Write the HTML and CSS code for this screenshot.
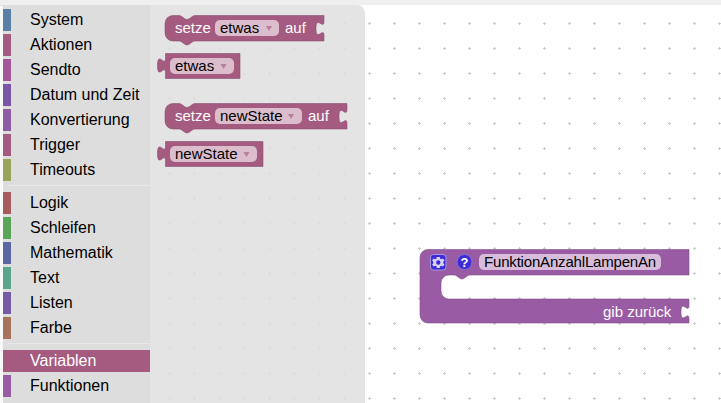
FILE: index.html
```html
<!DOCTYPE html>
<html lang="de">
<head>
<meta charset="utf-8">
<title>Blockly</title>
<link rel="stylesheet" href="styles.css">
</head>
<body>
<div class="topbar"></div>
<div class="editor">
  <ul class="toolbox">
    <li class="cat"><span class="strip c-system"></span>System</li>
    <li class="cat"><span class="strip c-aktionen"></span>Aktionen</li>
    <li class="cat"><span class="strip c-sendto"></span>Sendto</li>
    <li class="cat"><span class="strip c-datum"></span>Datum und Zeit</li>
    <li class="cat"><span class="strip c-konv"></span>Konvertierung</li>
    <li class="cat"><span class="strip c-trigger"></span>Trigger</li>
    <li class="cat"><span class="strip c-timeouts"></span>Timeouts</li>
    <li class="sep"></li>
    <li class="cat"><span class="strip c-logik"></span>Logik</li>
    <li class="cat"><span class="strip c-schleifen"></span>Schleifen</li>
    <li class="cat"><span class="strip c-mathe"></span>Mathematik</li>
    <li class="cat"><span class="strip c-text"></span>Text</li>
    <li class="cat"><span class="strip c-listen"></span>Listen</li>
    <li class="cat"><span class="strip c-farbe"></span>Farbe</li>
    <li class="sep"></li>
    <li class="cat selected"><span class="strip c-var"></span>Variablen</li>
    <li class="cat"><span class="strip c-funk"></span>Funktionen</li>
  </ul>
  <div class="canvas">
    <svg class="surface" width="571" height="398" viewBox="150 5 571 398" xmlns="http://www.w3.org/2000/svg">
      <defs>
        <pattern id="grid" x="157" y="11" width="25" height="25" patternUnits="userSpaceOnUse">
          <path class="dot" d="M12.500 11v3M11 12.500h3"/>
        </pattern>
      </defs>
      <rect x="150" y="5" width="571" height="398" fill="#fff"/>
      <rect x="150" y="5" width="571" height="398" fill="url(#grid)"/>
      <path class="flyout" d="M150 5H357a8 8 0 0 1 8 8V403H150Z"/>
      <rect x="150" y="5" width="215" height="398" fill="url(#grid)" opacity=".3"/>

      <!-- setze etwas auf -->
      <path class="blk var" d="M173 15.500H179c1 0 2 .5 3 1.200l2.800 2c.8 .5 1.500 .8 2.200 .8s1.400-.3 2.200-.8l2.800-2c1-.7 2-1.200 3-1.200H324V21.500c0 9-8-7-8 7s8-2 8 7V41H195c-1 0-2 .5-3 1.200l-2.800 2c-.8 .5-1.500 .8-2.200 .8s-1.400-.3-2.200-.8l-2.800-2c-1-.7-2-1.200-3-1.200H173a8 8 0 0 1-8-8V23.500a8 8 0 0 1 8-8Z"/>
      <text class="lbl" x="175" y="33">setze</text>
      <rect class="fld var-fld" x="215" y="20" width="64" height="16" rx="5"/>
      <text class="val" x="220" y="33">etwas</text>
      <polygon class="arr" points="266,26 272,26 269,31"/>
      <text class="lbl" x="285" y="33">auf</text>

      <!-- etwas -->
      <path class="blk var" d="M165.500 53.500H240V78.500H165.500V73c0-10-8 8-8-7.500s8 2.500 8-7.500Z"/>
      <rect class="fld var-fld" x="170" y="58" width="64" height="16" rx="5"/>
      <text class="val" x="175" y="71">etwas</text>
      <polygon class="arr" points="220.500,64 226.500,64 223.500,69"/>

      <!-- setze newState auf -->
      <path class="blk var" d="M173 103.500H179c1 0 2 .5 3 1.200l2.800 2c.8 .5 1.500 .8 2.200 .8s1.400-.3 2.200-.8l2.800-2c1-.7 2-1.200 3-1.200H347V109.500c0 9-8-7-8 7s8-2 8 7V129H195c-1 0-2 .5-3 1.200l-2.800 2c-.8 .5-1.500 .8-2.200 .8s-1.400-.3-2.200-.8l-2.800-2c-1-.7-2-1.200-3-1.200H173a8 8 0 0 1-8-8V111.500a8 8 0 0 1 8-8Z"/>
      <text class="lbl" x="175" y="121">setze</text>
      <rect class="fld var-fld" x="215" y="108" width="87" height="16" rx="5"/>
      <text class="val" x="220" y="121">newState</text>
      <polygon class="arr" points="288,114 294,114 291,119"/>
      <text class="lbl" x="308" y="121">auf</text>

      <!-- newState -->
      <path class="blk var" d="M165.500 141.500H263V166.500H165.500V161c0-10-8 8-8-7.500s8 2.500 8-7.500Z"/>
      <rect class="fld var-fld" x="170" y="146" width="87" height="16" rx="5"/>
      <text class="val" x="175" y="159">newState</text>
      <polygon class="arr" points="243.500,152 249.500,152 246.500,157"/>

      <!-- function block -->
      <path class="blk fn" d="M428 249.500H689V275H470c-1 0-2 .5-3 1.200l-2.800 2c-.8 .5-1.500 .8-2.200 .8s-1.400-.3-2.200-.8l-2.800-2c-1-.7-2-1.200-3-1.200H449a8 8 0 0 0-8 8V291a8 8 0 0 0 8 8H689V305.500c0 9-8-7-8 6.500s8-2 8 6.500V323H428a8 8 0 0 1-8-8V257.500a8 8 0 0 1 8-8Z"/>
      <rect class="gear-bg" x="430.500" y="254.500" width="15.500" height="15.500" rx="3"/>
      <path class="gear" fill-rule="evenodd" d="M436.800 257h3l.4 1.700 1.300.6 1.500-.9 1.500 2.200-1.200 1.200v1.400l1.200 1.200-1.500 2.200-1.500-.9-1.300.6-.4 1.700h-3l-.4-1.700-1.300-.6-1.500.9-1.500-2.200 1.200-1.200v-1.400l-1.200-1.200 1.500-2.200 1.500.9 1.300-.6Zm1.500 3.300a2.200 2.200 0 1 0 0 4.400 2.200 2.200 0 0 0 0-4.400Z"/>
      <circle class="help" cx="464.500" cy="262" r="7.500"/>
      <text class="help-q" x="464.500" y="266.500">?</text>
      <rect class="fld fn-fld" x="479" y="254" width="182" height="16" rx="5"/>
      <text class="val tight" x="484" y="267">FunktionAnzahlLampenAn</text>
      <text class="lbl" x="603" y="317">gib zurück</text>
    </svg>
  </div>
</div>
</body>
</html>
```

FILE: styles.css
```css
* { box-sizing: border-box; }
html, body { margin: 0; height: 100%; }
body {
  width: 721px;
  height: 403px;
  overflow: hidden;
  background: #f9f9f9;
  font-family: "Liberation Sans", Arial, sans-serif;
  display: flex;
  flex-direction: column;
}
.topbar {
  height: 6px;
  flex: none;
  background: #efefef;
  border-bottom: 1px solid #e4e4e4;
}
.editor {
  flex: 1;
  display: flex;
  min-height: 0;
  margin-top: -1px;
}
.toolbox {
  list-style: none;
  width: 147px;
  margin: 0 0 0 3px;
  padding: 4px 0 0;
  background: #ddd;
  flex: none;
}
.cat {
  height: 22px;
  margin-bottom: 3px;
  display: flex;
  align-items: center;
  font-size: 16px;
  color: #000;
  white-space: nowrap;
}
.strip {
  width: 8px;
  height: 22px;
  margin-right: 19px;
  flex: none;
}
.sep {
  height: 1px;
  margin: 4px 0 6px 5px;
  background: #e8e8e8;
}
.selected {
  background: #a55b80;
  color: #fff;
}
.c-system { background: #5b80a5; }
.c-aktionen { background: #a55b80; }
.c-sendto { background: #a5559a; }
.c-datum { background: #7a55a5; }
.c-konv { background: #8e5ba5; }
.c-trigger { background: #a55b80; }
.c-timeouts { background: #9aa55b; }
.c-logik { background: #a55b5b; }
.c-schleifen { background: #5ba55b; }
.c-mathe { background: #5b67a5; }
.c-text { background: #5ba58c; }
.c-listen { background: #745ba5; }
.c-farbe { background: #a5745b; }
.c-var { background: #a55b80; }
.c-funk { background: #9a5ba5; }
.canvas {
  flex: 1;
  min-width: 0;
}
.surface { display: block; }
.dot { stroke: #ccc; stroke-width: 1; fill: none; }
.flyout { fill: #e4e4e4; }
.blk { stroke-width: 1; stroke-linejoin: round; }
.var { fill: #a55b80; stroke: #84496a; stroke-opacity: .55; }
.fn { fill: #9a5ba5; stroke: #7b4984; stroke-opacity: .55; }
.lbl, .val {
  font-family: "Liberation Sans", Arial, sans-serif;
  font-size: 15px;
}
.lbl { fill: #fff; }
.val { fill: #000; }
.tight { letter-spacing: -.18px; }
.fld { stroke: none; }
.var-fld { fill: #dbbdcc; }
.fn-fld { fill: #d7bddb; }
.arr { fill: #b5809b; }
.gear-bg { fill: #3d2bd6; stroke: #a598e8; stroke-width: 1; }
.gear { fill: #d8d2f5; }
.help { fill: #3d2bd6; stroke: #7d6fdd; stroke-width: 1; }
.help-q {
  fill: #fff;
  font-family: "Liberation Sans", Arial, sans-serif;
  font-size: 13px;
  font-weight: 700;
  text-anchor: middle;
}
```
